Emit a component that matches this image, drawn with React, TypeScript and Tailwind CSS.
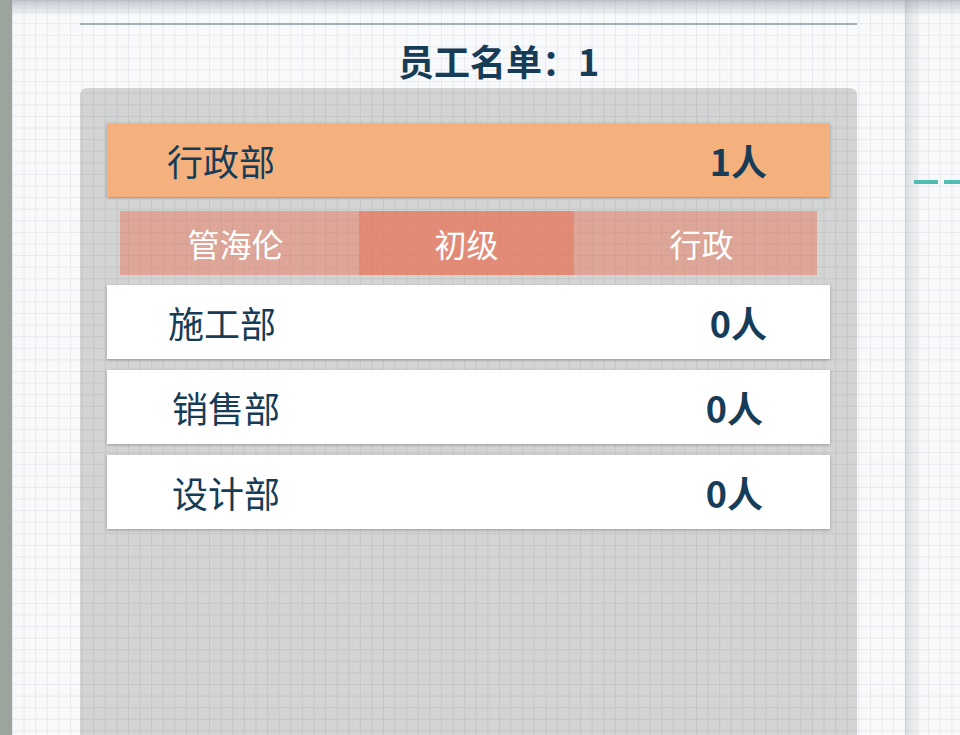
const depts = [
  { name: "施工部", count: 0, nameClass: "pl-[61px]", countClass: "pr-[63px]" },
  { name: "销售部", count: 0, nameClass: "pl-[65px]", countClass: "pr-[67px]" },
  { name: "设计部", count: 0, nameClass: "pl-[65px]", countClass: "pr-[67px]" },
];

const grid =
  "bg-[#f8f9fa] bg-[linear-gradient(to_right,#e7e9ec_1px,transparent_1px),linear-gradient(to_bottom,#e7e9ec_1px,transparent_1px)] bg-[size:11.6px_11.6px]";

function DeptRow({
  name,
  count,
  active,
  nameClass,
  countClass,
}: {
  name: string;
  count: number;
  active?: boolean;
  nameClass: string;
  countClass: string;
}) {
  return (
    <div
      className={`flex h-[74px] items-center justify-between text-[36px] text-[#173c57] shadow-[0_1px_3px_rgba(0,0,0,0.28)] ${
        active ? "bg-[#f5b17d]" : "bg-white"
      }`}
    >
      <span className={nameClass}>{name}</span>
      <span className={`font-bold ${countClass}`}>{count}人</span>
    </div>
  );
}

export default function App() {
  return (
    <div
      className="relative flex h-[735px] w-[960px] overflow-hidden"
      style={{ fontFamily: '"Noto Sans CJK SC", "Noto Sans", sans-serif' }}
    >
      <div className="w-[12px] shrink-0 bg-[#9ca49e]" />

      <main className={`flex w-[893px] shrink-0 flex-col pt-[23px] ${grid}`}>
        <div className="ml-[68px] h-[2px] w-[777px] bg-[#a3adb3]" />
        <h1 className="ml-[68px] flex h-[63px] w-[777px] items-center pl-[318px] pt-[7px] text-[36px] font-bold text-[#173c57]">
          员工名单：1
        </h1>
        <section className="ml-[68px] flex w-[777px] flex-1 flex-col rounded-t-[7px] bg-black/15 px-[27px] pt-[35px]">
          <DeptRow name="行政部" count={1} active nameClass="pl-[60px]" countClass="pr-[63px]" />
          <div className="mx-[13px] mt-[14px] mb-[10px] flex h-[64px] text-[32px] text-white">
            <span className="flex w-[239px] items-center justify-center bg-[#e86e50]/45 pr-[8px]">
              管海伦
            </span>
            <span className="flex w-[215px] items-center justify-center bg-[#e86e50]/70">
              初级
            </span>
            <span className="flex flex-1 items-center justify-center bg-[#e86e50]/45 pl-[12px]">
              行政
            </span>
          </div>
          <div className="flex flex-col gap-[11px]">
            {depts.map((d) => (
              <DeptRow key={d.name} {...d} />
            ))}
          </div>
        </section>
      </main>

      <aside className={`flex-1 ${grid}`}>
        <div className="h-full bg-[linear-gradient(to_right,rgba(140,150,160,0.28),transparent_16px)] pt-[180px] pl-[9px]">
          <div className="h-[4px] w-full bg-[repeating-linear-gradient(to_right,#4fbdb3_0_24px,transparent_24px_30px)]" />
        </div>
      </aside>

      <div className="pointer-events-none absolute top-0 right-0 left-[12px] h-[16px] bg-gradient-to-b from-[rgba(130,140,150,0.45)] to-transparent" />
    </div>
  );
}
